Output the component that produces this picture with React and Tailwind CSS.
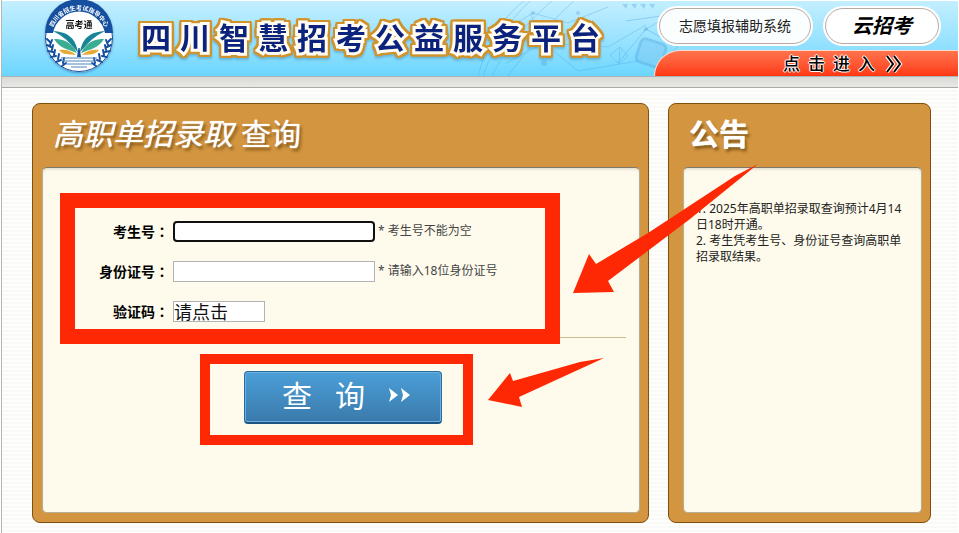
import { useState } from 'react'
import { clsx } from 'clsx'

const SITE_NAME = '四川智慧招考公益服务平台'

const FIELDS = [
  { id: 'ksh', label: '考生号', hint: '* 考生号不能为空', focus: true },
  { id: 'sfzh', label: '身份证号', hint: '* 请输入18位身份证号' },
]

const NOTICES = [
  '2025年高职单招录取查询预计4月14日18时开通。',
  '考生凭考生号、身份证号查询高职单招录取结果。',
]

function Spaced({ text, className }) {
  return (
    <span className={clsx('flex', className)}>
      {[...text].map((char, i) => (
        <span key={i}>{char}</span>
      ))}
    </span>
  )
}

function Logo() {
  return (
    <svg viewBox="0 0 70 70" className="h-[70px] w-[70px] shrink-0 overflow-visible drop-shadow-[0_1px_1px_#33669999]" role="img" aria-label="高考通">
      <defs>
        <path id="ring" d="M7 35a28 28 0 0 1 56 0" />
      </defs>
      <circle cx="35" cy="35" r="34" fill="#fff" />
      <path d="M1 30A34 34 0 0 1 69 30L61 30A26.500 26.500 0 0 0 9 30Z" fill="#14509f" />
      <circle cx="35" cy="35" r="33.500" fill="none" stroke="#14509f" />
      <text fill="#fff" fontSize="6" fontWeight="700">
        <textPath href="#ring" startOffset="50%" textAnchor="middle">四川省招生考试指导中心</textPath>
      </text>
      <text x="35" y="25" textAnchor="middle" fontSize="9" fontWeight="700" fill="#111">高考通</text>
      {/* left half of the book, mirrored for the right */}
      {[undefined, 'translate(70 0) scale(-1 1)'].map((transform) => (
        <g key={transform || 'left'} transform={transform}>
          <path d="M9 28C22 29 31 33 34 49C28 44 26 37 9 28Z" fill="#188498" />
          <path d="M10 36C18 36 27 38 33 50C24 46 16 46 10 36Z" fill="#3bad93" />
          <path d="M15 47C22 46 28 48 32 52C26 51 20 53 15 47Z" fill="#e6ab35" />
          <path
            d="M3 36l3 3M3 42l4 2M4 48l5 1M7 54l5-1M12 59l5-2M18 63l4-3M8 37l-2 5M9 42l-1 5M11 47l-1 5M15 51l-1 5M20 55l-1 5"
            stroke="#14509f"
            strokeWidth="2"
            strokeLinecap="round"
          />
        </g>
      ))}
      <path d="M34 47h2l1 7h-4Z" fill="#14509f" />
      <circle cx="35" cy="46" r="1" fill="#14509f" />
      <path d="M17 55H53M19 58H51M22 61H48M27 64H43" stroke="#4a83bd" strokeWidth="1" />
    </svg>
  )
}

function HeaderArt() {
  return (
    <svg viewBox="0 0 480 75" className="absolute top-0 right-0 h-[75px] w-[480px]" fill="none" stroke="#4da3dc" aria-hidden="true">
      <g opacity=".35">
        <path d="M0 75C8 45 22 18 46 0M5 75C15 46 30 20 52 0M14 75C25 52 45 24 74 0M30 75C45 55 70 22 96 0" />
        <path d="M10 40L55 12L90 22L130 6M28 62L66 42L100 70L160 60M52 12L66 42L130 46L168 24" />
        <path d="M132 54l10-8 8 9-9 8zM142 46l-1 17M165 30l20-12 14 10" />
      </g>
      <g opacity=".4">
        <path d="M140 62L168 28L200 46L176 66M196 70L240 74M148 20L190 14L220 30" />
        <rect x="160" y="40" width="26" height="24" rx="5" strokeWidth="3" transform="rotate(18 173 52)" fill="#7cc4f0" />
      </g>
      <g fill="#4da3dc" stroke="none" opacity=".35">
        <circle cx="55" cy="12" r="2" />
        <circle cx="66" cy="62" r="3" />
        <circle cx="100" cy="12" r="2" />
        <circle cx="168" cy="28" r="2" />
        <path d="M144 3h6l-2 5zM153 3h6l-2 5zM162 3h6l-2 5zM171 3h6l-2 5z" />
      </g>
    </svg>
  )
}

function Header() {
  return (
    <header className="relative mt-px flex h-[76px] border-b border-[#a9b4b8] bg-linear-to-b from-[#c3efff] to-[#6bd6ff]">
      <HeaderArt />
      <a href="#" className="relative mt-[2px] ml-[42px] h-[70px]">
        <Logo />
      </a>
      <h1
        aria-label={SITE_NAME}
        className="relative ml-[27px] mt-[14px] text-[30px] leading-[46px] font-bold text-[#0b237c] [-webkit-text-stroke:6px_#fffdf5] [paint-order:stroke_fill] [filter:drop-shadow(2px_0_0_#d0922a)_drop-shadow(-2px_0_0_#d0922a)_drop-shadow(0_2px_0_#d0922a)_drop-shadow(0_-2px_0_#d0922a)_drop-shadow(0_2px_1px_#3d7d9d66)]"
      >
        <Spaced text={SITE_NAME} className="gap-[9px]" />
      </h1>
      <div className="relative ml-auto flex w-[304px] flex-col justify-between">
        <div className="mt-[7px] flex gap-[14px] pl-[5px]">
          <a
            href="#"
            className="flex h-[36px] w-[152px] items-center justify-center rounded-full border border-[#b7aaa3] bg-[#fbfeff] text-sm text-[#222] ring-2 ring-white"
          >
            志愿填报辅助系统
          </a>
          <a
            href="#"
            className="flex h-[36px] w-[114px] items-center justify-center rounded-full border border-[#b7aaa3] bg-white text-xl font-bold text-black italic ring-2 ring-white"
          >
            云招考
          </a>
        </div>
        <a
          href="#"
          className="flex h-[26px] items-center rounded-tl-[26px] border-t border-l border-[#ffd9cc] bg-linear-to-b from-[#ff734c] to-[#ff3510] pl-[128px] text-[17px] font-medium text-black [text-shadow:1px_0_#fff,-1px_0_#fff,0_1px_#fff,0_-1px_#fff]"
        >
          <Spaced text="点击进入" className="gap-2" />
          <svg viewBox="0 0 18 18" className="ml-[10px] h-[18px] w-[18px]" fill="none" aria-hidden="true">
            <path d="M2 1l6 8-6 8M9 1l6 8-6 8" stroke="#fff" strokeWidth="4" />
            <path d="M2 1l6 8-6 8M9 1l6 8-6 8" stroke="#000" strokeWidth="2" />
          </svg>
        </a>
      </div>
    </header>
  )
}

function Panel({ title, className, bodyClassName, children }) {
  return (
    <section className={clsx('flex flex-col rounded-lg border border-[#80500f] bg-[#d3953f] pb-[9px]', className)}>
      <h2 className="flex h-[63px] items-center gap-2 pb-1 text-[30px] leading-[36px] text-white [text-shadow:0_0_1px_#fff,2px_3px_3px_#4d300099]">
        {title}
      </h2>
      <div className={clsx('flex-1 rounded-[5px] border border-[#b8ae94] border-t-[#80796a] bg-[#fefbec] shadow-[inset_0_2px_2px_#00000018]', bodyClassName)}>
        {children}
      </div>
    </section>
  )
}

function FieldLabel({ htmlFor, children }) {
  return (
    <label htmlFor={htmlFor} className="w-[113px] pr-1 text-right text-sm font-bold text-black">
      {children}
      <span className="font-['Noto_Sans_CJK_TC',sans-serif]">：</span>
    </label>
  )
}

function QueryForm() {
  const [values, setValues] = useState({ ksh: '', sfzh: '', yzm: '请点击' })

  const onChange = (e) => setValues({ ...values, [e.target.id]: e.target.value })

  return (
    <form onSubmit={(e) => e.preventDefault()} className="pt-[48px] pr-[13px] pl-[17px]">
      <div className="flex flex-col gap-[10px] border-b border-[#c9bd94] pb-[11px]">
        {FIELDS.map((field) => (
          <div key={field.id} className="flex h-[30px] items-center">
            <FieldLabel htmlFor={field.id}>{field.label}</FieldLabel>
            <input
              id={field.id}
              value={values[field.id]}
              onChange={onChange}
              className={clsx(
                'h-[21px] w-[202px] bg-white px-px text-sm outline-none',
                field.focus ? 'rounded-[4px] border-2 border-[#101010]' : 'border border-[#b3b3b3]'
              )}
            />
            <span className="pl-[3px] text-xs text-[#444]">{field.hint}</span>
          </div>
        ))}
        <div className="flex h-[30px] items-center">
          <FieldLabel htmlFor="yzm">验证码</FieldLabel>
          <input
            id="yzm"
            value={values.yzm}
            onChange={onChange}
            className="h-[21px] w-[92px] border border-[#b3b3b3] bg-white text-lg leading-[19px] text-[#111] outline-none"
          />
        </div>
      </div>
      <button
        type="submit"
        className="mt-[33px] ml-[184px] flex h-[53px] w-[198px] items-center rounded-[4px] border border-[#2b6a9b] border-b-2 border-b-[#1f5480] bg-linear-to-b from-[#4b9fd8] to-[#3a7aab] pb-1 pl-[37px] text-[30px] text-white shadow-[inset_0_0_0_1px_#69b1e2]"
      >
        <Spaced text="查询" className="gap-[23px]" />
        <svg viewBox="0 0 22 16" className="ml-[24px] h-4 w-[22px]" fill="#fff" aria-hidden="true">
          <path d="M0 1l9 7-9 7 2-7zM12 1l9 7-9 7 2-7z" />
        </svg>
      </button>
    </form>
  )
}

// red boxes and arrows laid over the page
function Marks() {
  return (
    <div className="pointer-events-none absolute top-0 left-0" aria-hidden="true">
      <div className="absolute top-[193px] left-[60px] h-[151px] w-[500px] border-[15px] border-[#ff2804]" />
      <div className="absolute top-[354px] left-[200px] h-[91px] w-[273px] border-[10px] border-[#ff2804]" />
      <svg viewBox="480 150 300 270" className="absolute top-[150px] left-[480px] h-[270px] w-[300px]" fill="#ff2804">
        <path d="M758 164L735 176L648 233L596 264L589 254L573 293L614 292L608 281L690 219Z" />
        <path d="M604 358L580 362L513 381L510 373L488 400L522 407L519 397Z" />
      </svg>
    </div>
  )
}

export default function App() {
  return (
    <div className="relative min-h-screen bg-white px-px font-['Noto_Sans','Noto_Sans_CJK_SC',sans-serif]">
      <div className="flex min-h-screen flex-col border-l border-[#b5b5b5]">
        <Header />
        <div className="h-[11px] border-b border-[#a8a8a8] bg-linear-to-b from-[#d9d9d6] to-[#e8e8e5]" />
        <main className="flex flex-1 gap-[19px] bg-[repeating-linear-gradient(#fefefc_0_2px,#f9faf6_2px_4px)] pt-[15px] pr-[27px] pb-[10px] pl-[30px]">
          <Panel
            className="flex-1"
            bodyClassName="mr-[8px] ml-[9px]"
            title={
              <>
                <span className="pl-5 italic">高职单招录取</span>
                <span>查询</span>
              </>
            }
          >
            <QueryForm />
          </Panel>
          <Panel className="w-[263px]" bodyClassName="mr-[8px] ml-[14px]" title={<span className="pl-5 font-bold">公告</span>}>
            <ol className="pt-[33px] pr-[18px] pl-3 text-xs leading-4 text-[#222]">
              {NOTICES.map((notice, i) => (
                <li key={notice}>{`${i + 1}. ${notice}`}</li>
              ))}
            </ol>
          </Panel>
        </main>
      </div>
      <Marks />
    </div>
  )
}
